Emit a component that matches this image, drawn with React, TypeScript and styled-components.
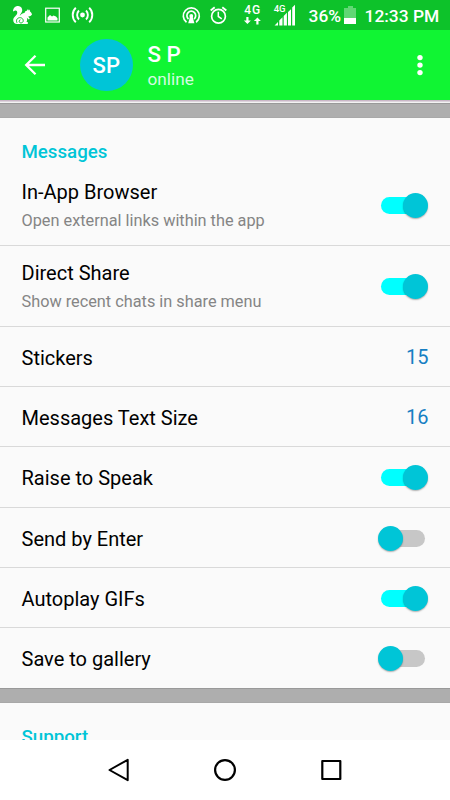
import React from "react";
import styled, { createGlobalStyle } from "styled-components";

const Global = createGlobalStyle`
  * { box-sizing: border-box; }
  body { margin: 0; background: #fff; font-family: Roboto, sans-serif; }
`;

const Screen = styled.div`
  width: 450px;
  height: 800px;
  display: flex;
  flex-direction: column;
  overflow: hidden;
  background: #fafafa;
`;

const StatusBar = styled.header`
  height: 30px;
  flex: none;
  display: flex;
  justify-content: space-between;
  background: #0dc22a;
  color: #fff;
`;

const StatusIcons = styled.svg`
  display: block;
  flex: none;
`;

const StatusRight = styled.div`
  display: flex;
  width: 270px;
`;

const StatusText = styled.span<{ $width: number }>`
  width: ${(p) => p.$width}px;
  font-size: 17.4px;
  line-height: 32px;
  font-weight: 500;
  white-space: nowrap;
`;

const AppBar = styled.div`
  height: 70px;
  flex: none;
  display: flex;
  align-items: center;
  padding: 0 20px 0 20px;
  background: #10f533;
  color: #fff;
`;

const Avatar = styled.div`
  width: 52.5px;
  height: 52.5px;
  margin-left: 30px;
  border-radius: 50%;
  background: #00c5d7;
  font-size: 22px;
  font-weight: 500;
  line-height: 53px;
  text-align: center;
`;

const Contact = styled.div`
  flex: 1;
  margin-left: 15px;
  padding-top: 2px;
`;

const ContactName = styled.div`
  font-size: 22.3px;
  font-weight: 500;
  line-height: 26px;
`;

const Presence = styled.div`
  font-size: 17.2px;
  line-height: 25px;
  color: #d5fce0;
`;

const BarEdge = styled.div`
  height: 3px;
  flex: none;
  background: linear-gradient(#c9b6c6 0 1px, #dcd3db 1px 2px, #f3f3f3 2px 3px);
`;

const Gap = styled.div<{ $height: number }>`
  height: ${(p) => p.$height}px;
  flex: none;
  background: #aeaeae;
  border-top: 1px solid #999;
  border-bottom: 1px solid #a8a8a8;
`;

const Section = styled.section<{ $height: number }>`
  height: ${(p) => p.$height}px;
  flex: none;
  overflow: hidden;
`;

const SectionTitle = styled.h2`
  height: 47px;
  margin: 0;
  padding: 20px 21.5px 0;
  color: #00c5d7;
  font-size: 18.7px;
  font-weight: 500;
  line-height: 29px;
`;

const Row = styled.div<{ $height: number }>`
  height: ${(p) => p.$height}px;
  display: flex;
  align-items: center;
  justify-content: space-between;
  padding: 1px 21.5px 0;
  border-bottom: 1px solid #d9d9d9;
  &:last-child { border-bottom-color: #fafafa; }
`;

const Label = styled.div`
  padding-top: 1px;
  font-size: 20px;
  line-height: 28px;
  color: #000;
`;

const Hint = styled.div`
  margin-top: 2px;
  font-size: 16.3px;
  line-height: 26px;
  color: #858585;
`;

const Value = styled.div`
  font-size: 20px;
  line-height: 28px;
  color: #167fc3;
`;

const Track = styled.div<{ $on: boolean }>`
  width: 44px;
  height: 17px;
  margin-right: 3.5px;
  position: relative;
  border-radius: 9px;
  background: ${(p) => (p.$on ? "#00ffff" : "#c7c7c7")};
`;

const Thumb = styled.div<{ $on: boolean }>`
  position: absolute;
  top: -4px;
  left: ${(p) => (p.$on ? 21.5 : -3)}px;
  width: 25px;
  height: 25px;
  border-radius: 50%;
  background: #00c5d7;
  box-shadow: 0 1px 1.5px rgba(0, 0, 0, 0.3);
`;

const NavBar = styled.nav`
  height: 60px;
  flex: none;
  display: flex;
  align-items: center;
  justify-content: center;
  gap: 76px;
  background: #fff;
`;

const Toggle = ({ on }: { on: boolean }) => (
  <Track $on={on} role="switch" aria-checked={on}>
    <Thumb $on={on} />
  </Track>
);

type Setting = { label: string; height: number; hint?: string; on?: boolean; value?: number };

const settings: Setting[] = [
  { label: "In-App Browser", hint: "Open external links within the app", on: true, height: 81 },
  { label: "Direct Share", hint: "Show recent chats in share menu", on: true, height: 81 },
  { label: "Stickers", value: 15, height: 60 },
  { label: "Messages Text Size", value: 16, height: 60 },
  { label: "Raise to Speak", on: true, height: 61 },
  { label: "Send by Enter", on: false, height: 60 },
  { label: "Autoplay GIFs", on: true, height: 60 },
  { label: "Save to gallery", on: false, height: 60 },
];

export default function App() {
  return (
    <Screen>
      <Global />
      <StatusBar>
        <StatusIcons width="110" height="30" viewBox="0 0 110 30" fill="none" stroke="#fff">
          <path
            fill="#fff"
            stroke="none"
            d="M13 11.500C13 8 15.500 5.800 18.200 6c2.800.2 4.300 2.300 4 4.700-.3 2.400-2.300 3.300-2.500 5.300 1.300-1.800 3-2.800 5-3.200.2-1.300.9-2 2.100-2.100L28 9l.7 1.500 1-.9.3 2c1 .7 1.700 1.600 2 2.900-.7 1.300-2 1.900-3.800 1.900l1.600 2.300-1 .8-2-1.700c.6 1.700.4 3.200-.3 4.200h1.300v2H17.300c-2.500-.1-4.200-1.800-4.100-4.100.1-3 3.300-4 4-6.700.4-1.700-.5-3-1.900-2.800-1 .1-1.500.7-2.300 1.100z"
          />
          <path stroke="#0dc22a" strokeWidth="1" d="M17 22.800c-1.500-2.700.6-5.600 3.600-5.100 3.100.5 3.600 4.700.8 5.200-2.300.4-3.100-2.500-1-3.100" />
          <rect x="45.700" y="8.200" width="13.600" height="13.800" strokeWidth="1.200" />
          <path fill="#fff" stroke="none" d="M47.500 20.500v-3l2.500-2.500 2 1.500 1.500-1 2.500 1 1.500 1.700v2.300z" />
          <circle cx="82.500" cy="15" r="2.400" fill="#fff" stroke="none" />
          <path strokeWidth="1.900" d="M79 10.500c-2.500 2.300-2.500 6.700 0 9M86 10.500c2.500 2.300 2.500 6.700 0 9M75.800 7.800c-4.100 3.700-4.100 10.700 0 14.400M89.200 7.800c4.100 3.700 4.100 10.700 0 14.400" />
        </StatusIcons>
        <StatusRight>
          <StatusIcons width="62" height="30" viewBox="180 0 62 30" fill="none" stroke="#fff">
            <path strokeWidth="1.700" d="M186.500 22.300a8 8 0 1 1 9.600 0M188.500 19a4.400 4.400 0 1 1 5.600 0" />
            <circle cx="191.300" cy="16" r="1.900" fill="#fff" stroke="none" />
            <path fill="#fff" stroke="none" d="M190.200 16h2.200l2 7.300h-6.200z" />
            <circle cx="218.500" cy="16.200" r="6.900" strokeWidth="1.700" />
            <path strokeWidth="1.500" d="M218.300 11.700v4.800l3.500 2.300" />
            <path strokeWidth="1.900" d="M210.700 10.600l4-3.300M226.300 10.600l-4-3.300" />
          </StatusIcons>
          <StatusIcons width="66.500" height="30" viewBox="242 0 66.500 30" fill="#fff">
            <text x="244.300" y="13.800" fontFamily="Roboto" fontSize="12" fontWeight="500" letterSpacing=".8">4G</text>
            <path d="M246.300 17h2.200v3.400h2.400l-3.500 3.600-3.500-3.600h2.400zM256.300 24.500h2.200v-3.500h2.400l-3.500-3.600-3.500 3.600h2.400z" />
            <text x="273.700" y="11.500" fontFamily="Roboto" fontSize="9.500" fontWeight="500" letterSpacing="-.2">4G</text>
            <path d="M274.500 25.500l3.500-3.500v3.500zM279.300 20.500l3.200-3.200v8.200h-3.200zM283.700 16l3.200-3.200v12.700h-3.200zM288 12l3-2.700v16.200h-3zM292.200 7.500l2.800-2.700v20.700h-2.800z" />
          </StatusIcons>
          <StatusText $width={33.5}>36%</StatusText>
          <StatusIcons width="22.500" height="30" viewBox="342 0 22.500 30">
            <path fill="#fff" fillOpacity=".35" d="M344 8h4V6h5v2h3v10h-12z" />
            <path fill="#fff" d="M344 18h12v6h-12z" />
          </StatusIcons>
          <StatusText $width={80}>12:33 PM</StatusText>
        </StatusRight>
      </StatusBar>
      <AppBar>
        <svg width="30" height="30" viewBox="20 50 30 30" fill="none" stroke="#fff" strokeWidth="2.300">
          <path d="M45 65H26.500M35.500 55.700L26.200 65l9.300 9.300" />
        </svg>
        <Avatar>SP</Avatar>
        <Contact>
          <ContactName>S P</ContactName>
          <Presence>online</Presence>
        </Contact>
        <svg width="20" height="30" viewBox="410 50 20 30" fill="#fff">
          <circle cx="420" cy="57.600" r="2.700" />
          <circle cx="420" cy="65.100" r="2.700" />
          <circle cx="420" cy="72.600" r="2.700" />
        </svg>
      </AppBar>
      <BarEdge />
      <Gap $height={15} />
      <Section $height={570}>
        <SectionTitle>Messages</SectionTitle>
        {settings.map((s) => (
          <Row key={s.label} $height={s.height}>
            <div>
              <Label>{s.label}</Label>
              {s.hint && <Hint>{s.hint}</Hint>}
            </div>
            {s.value !== undefined ? <Value>{s.value}</Value> : <Toggle on={!!s.on} />}
          </Row>
        ))}
      </Section>
      <Gap $height={15} />
      <Section $height={37}>
        <SectionTitle>Support</SectionTitle>
      </Section>
      <NavBar>
        <svg width="30" height="30" viewBox="104 755 30 30" fill="none" stroke="#000" strokeWidth="2" strokeLinejoin="round">
          <path d="M127.700 759.800v20.400L109.500 770z" />
        </svg>
        <svg width="30" height="30" viewBox="210 755 30 30" fill="none" stroke="#000" strokeWidth="2.200">
          <circle cx="225" cy="770" r="9.900" />
        </svg>
        <svg width="30" height="30" viewBox="316 755 30 30" fill="none" stroke="#000" strokeWidth="2.200" strokeLinejoin="round">
          <path d="M322.300 761h18v18h-18z" />
        </svg>
      </NavBar>
    </Screen>
  );
}
